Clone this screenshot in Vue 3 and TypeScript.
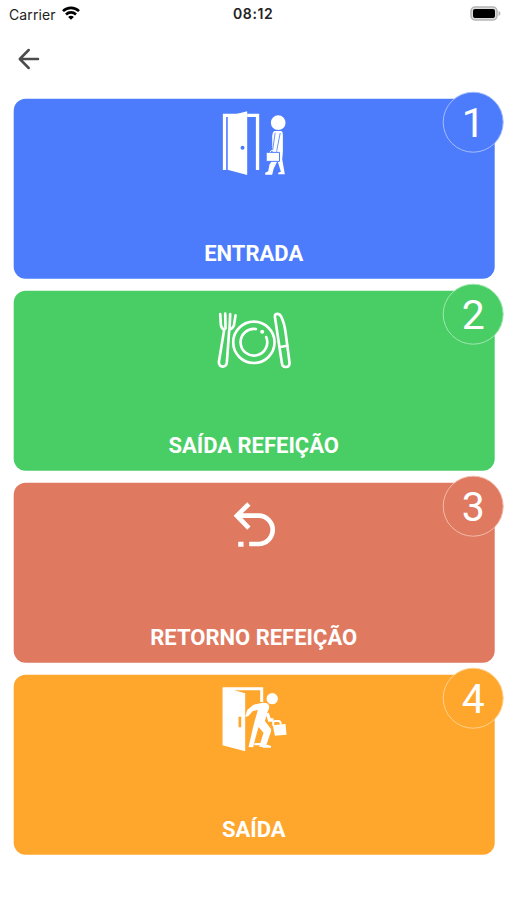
<script setup lang="ts">
interface PunchOption {
  step: number
  label: string
  tone: string
  viewBox: string
}

const options: PunchOption[] = [
  { step: 1, label: 'ENTRADA', tone: 'blue', viewBox: '4.5 -6 252 270' },
  { step: 2, label: 'SAÍDA REFEIÇÃO', tone: 'green', viewBox: '19.5 -30 252 270' },
  { step: 3, label: 'RETORNO REFEIÇÃO', tone: 'coral', viewBox: '-25.5 -24 252 270' },
  { step: 4, label: 'SAÍDA', tone: 'orange', viewBox: '4.5 -18 252 270' },
]
</script>

<template>
  <div class="screen">
    <header class="status">
      <div class="carrier">
        <span>Carrier</span>
        <svg class="wifi" viewBox="0 0 18 14" fill="none" stroke="#000" stroke-width="2.6">
          <path d="M1 5.2C5.4 .7 12.6 .7 17 5.2" />
          <path d="M4 8.5c2.8-2.8 7.2-2.8 10 0" />
          <path d="M9 13.7 6.1 10.9c1.6-1.5 4.2-1.5 5.8 0z" fill="#000" stroke="none" />
        </svg>
      </div>
      <span class="time">08:12</span>
      <svg class="battery" viewBox="0 0 31 15">
        <rect x="1" y="1" width="26" height="13" rx="4" fill="#ddd" stroke="#b5b5b5" stroke-width="1.5" />
        <rect x="3" y="3" width="22" height="9" rx="2" fill="#000" />
        <path d="M28.5 5v5c2.6-.8 2.6-4.2 0-5z" fill="#b5b5b5" />
      </svg>
    </header>

    <nav class="toolbar">
      <button class="back" type="button" aria-label="Voltar">
        <svg viewBox="0 0 22 22" fill="none" stroke="#4c4c4c" stroke-width="2.5" stroke-linecap="round" stroke-linejoin="round">
          <path d="M10.7 2 1.8 11l8.9 9M2 11h18" />
        </svg>
      </button>
    </nav>

    <main class="options">
      <button v-for="option in options" :key="option.step" type="button" class="card" :class="option.tone">
        <svg class="icon" :viewBox="option.viewBox">
          <g v-if="option.step === 1" fill="#fff">
            <path d="M38 39H111V49H48V208H38z" />
            <path d="M52 47 111 32V223L52 207z" />
            <path d="M111 39H147V208H137V49H111z" />
            <path class="cut-line" d="M51 49V207" stroke-width="2" />
            <circle class="cut-fill" cx="97" cy="141" r="6" />
            <circle cx="204" cy="66" r="22" />
            <path d="M192 91H214Q218 93 218 102V154L216 176 224 221H204V216L212 213 202 180 190 205 186 222H165V216L174 212 178 191 188 178V155L186 150V105Q187 94 192 91z" />
            <path class="cut-line" d="M195 96 187 150M210 97 199 153" stroke-width="2.5" fill="none" />
            <path class="cut-line" d="M168 155H208V182H168z" stroke-width="3" />
            <path d="M179 155Q180 148 190 149L199 148" fill="none" stroke="#fff" stroke-width="3" />
          </g>

          <g v-else-if="option.step === 2" fill="none" stroke="#fff" stroke-width="8" stroke-linecap="round" stroke-linejoin="round">
            <path d="M45 40 47 72Q49 84 57 87L41 184C40 202 64 202 65 185L72 88Q83 83 86 75L91 44" />
            <path d="M60 39 61 83M75 40 73 83" />
            <circle cx="146" cy="125" r="62" />
            <path d="M152 85A40 40 0 1 0 183 109" />
            <circle cx="171" cy="93" r="6" fill="#fff" stroke="none" />
            <path d="M209 48C209 37 222 37 228 48Q237 66 241 94L253 186C255 202 232 204 230 187z" />
            <path d="M225 139 246 135" />
          </g>

          <g v-else-if="option.step === 3">
            <path d="M86 40 50 75 86 112M51 75H115A42 42 0 0 1 115 160H87" fill="none" stroke="#fff" stroke-width="14" />
            <path d="M54 153H70V168H54z" fill="#fff" />
          </g>

          <g v-else fill="#fff">
            <path d="M37 20H159V64H150V29H72L105 38V212L37 194z" />
            <rect class="cut-fill" x="85" y="108" width="8" height="32" rx="2" />
            <circle cx="186" cy="54" r="17" />
            <path d="M105 108 111 88 130 72 159 66Q174 65 177 76 178 83 172 94L164 121 183 146 182 154 166 200 147 198 160 156 145 139 136 171 129 200 115 199 126 151 132 126 143 88 128 91 114 107z" />
            <path d="M171 98 178 118H190" fill="none" stroke="#fff" stroke-width="10" />
            <path d="M189 135V125Q190 121 196 121H206Q211 121 212 132" fill="none" stroke="#fff" stroke-width="6" />
            <path d="M188 134 226 130 229 162 194 165z" />
            <path d="M133 187H151V194H132zM163 190 183 196 182 201H157z" />
          </g>
        </svg>
        <span class="label">{{ option.label }}</span>
        <span class="badge">{{ option.step }}</span>
      </button>
    </main>
  </div>
</template>

<style>
body {
  background: #fff;
}
</style>

<style scoped>
.screen {
  box-sizing: border-box;
  width: 507px;
  height: 900px;
  overflow: hidden;
  background: #fff;
  font-family: Roboto, sans-serif;
}

.status {
  box-sizing: border-box;
  height: 28px;
  padding: 0 6px 0 9px;
  display: grid;
  grid-template-columns: 224px auto 1fr;
  align-items: center;
  font-family: Inter, sans-serif;
  font-size: 14px;
  line-height: 17px;
  color: #222;
}

.carrier {
  display: flex;
  align-items: center;
  gap: 6px;
  letter-spacing: 0.1px;
}

.wifi {
  width: 18px;
  height: 14px;
  margin-top: -2px;
}

.time {
  margin-top: -1px;
  font-weight: 600;
  letter-spacing: 0.6px;
}

.battery {
  width: 31px;
  height: 15px;
  margin-top: -2px;
  justify-self: end;
}

.toolbar {
  box-sizing: border-box;
  height: 70.5px;
  padding: 20px 18px 0;
}

.back {
  display: block;
  padding: 0;
  border: 0;
  background: none;
}

.back svg {
  display: block;
  width: 22px;
  height: 22px;
}

.options {
  display: grid;
  gap: 12px;
  padding: 0 12.5px 0 13.5px;
}

.card {
  --tone: #4c7cfb;
  --ring: #a4bdff;
  position: relative;
  box-sizing: border-box;
  height: 180px;
  padding: 0;
  border: 0;
  border-radius: 12px;
  display: flex;
  flex-direction: column;
  align-items: center;
  background: var(--tone);
  color: #fff;
  font-family: inherit;
  transform: translate(-0.3px, -0.3px);
}

.green {
  --tone: #49cd65;
  --ring: #a0e8af;
}

.coral {
  --tone: #df795f;
  --ring: #f2bcac;
}

.orange {
  --tone: #ffa62c;
  --ring: #ffd28f;
}

.icon {
  width: 84px;
  height: 90px;
}

.cut-fill {
  fill: var(--tone);
}

.cut-line {
  stroke: var(--tone);
}

.label {
  margin-top: 52px;
  font-size: 22px;
  font-weight: 700;
  line-height: 26px;
}

.badge {
  position: absolute;
  top: -7px;
  right: -9.5px;
  box-sizing: border-box;
  width: 61px;
  height: 61px;
  border: 1px solid var(--ring);
  border-radius: 50%;
  background: var(--tone);
  font-size: 41px;
  line-height: 61px;
  text-align: center;
}
</style>
